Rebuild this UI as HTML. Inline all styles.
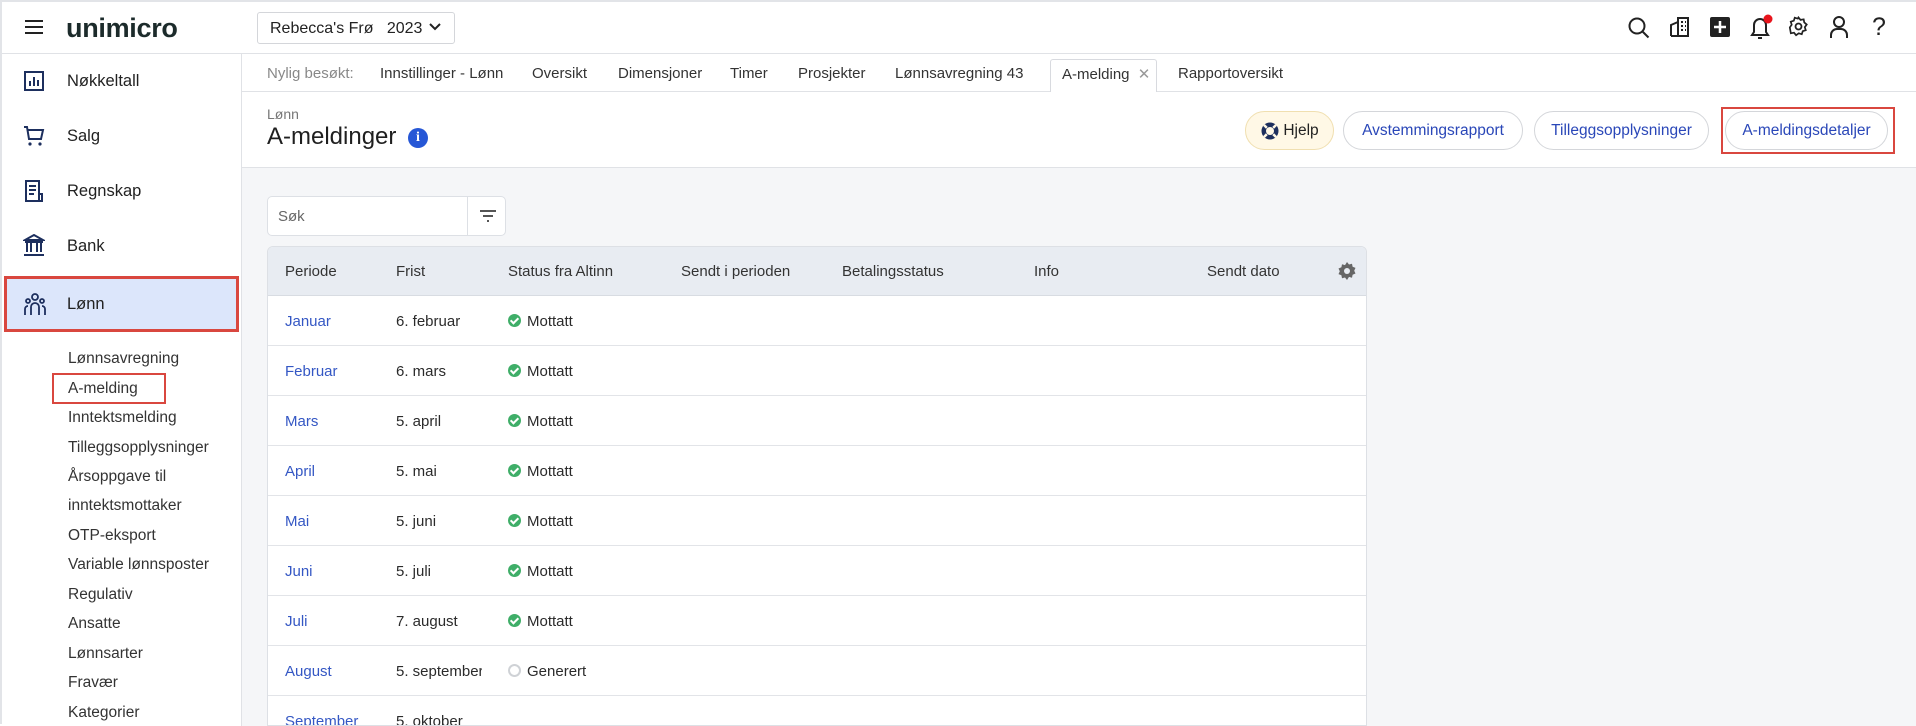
<!DOCTYPE html>
<html><head><meta charset="utf-8"><style>
*{box-sizing:border-box;margin:0;padding:0}
body{width:1916px;height:724px;overflow:hidden;font-family:"Liberation Sans",sans-serif;color:#2b2b2b;background:#fff;position:relative;border:2px solid #e2e4e8}
.abs{position:absolute}
.hdr{left:0;top:0;width:1916px;height:52px;border-bottom:1px solid #e0e2e6;background:#fff}
.side{left:0;top:52px;width:240px;height:672px;border-right:1px solid #e0e2e6;background:#fff}
.nav{position:absolute;left:65px;font-size:16.5px;color:#222}
.sub{position:absolute;left:66px;font-size:15.5px;color:#333}
.tabs{left:240px;top:52px;width:1676px;height:38px;border-bottom:1px solid #e0e2e6;background:#fff;font-size:15px}
.tabs span{position:absolute;top:11px;color:#333}
.ph{left:240px;top:90px;width:1676px;height:76px;background:#fff;border-bottom:1px solid #e0e2e6}
.content{left:240px;top:166px;width:1676px;height:558px;background:#f5f6f8}
.btn{position:absolute;top:109px;height:39px;border:1px solid #d4d6da;border-radius:20px;background:#fff;color:#2a47b8;font-size:15.5px;display:flex;align-items:center;justify-content:center}
.tbl{left:265px;top:244px;width:1100px;height:480px;background:#fff;border:1px solid #dde0e5;border-radius:6px 6px 0 0;overflow:hidden}
.th{height:49px;background:#e8ecf2;border-bottom:1px solid #d8dce2;position:relative;font-size:15px;color:#333}
.th span,.row span{position:absolute}
.th span{top:16px}
.row{height:50px;border-bottom:1px solid #e2e4e8;position:relative;font-size:15px}
.row span{top:17px}
.lnk{color:#3457c4}
.ok{display:inline-block;width:13px;height:13px;border-radius:50%;background:#3fae68;vertical-align:-1px;margin-right:6px;position:relative}
.ok:after{content:"";position:absolute;left:4px;top:2px;width:3px;height:6px;border:solid #fff;border-width:0 2px 2px 0;transform:rotate(45deg)}
.gen{display:inline-block;width:13px;height:13px;border-radius:50%;border:2px solid #cfd2d6;vertical-align:-1px;margin-right:6px}
</style></head><body>
<div class="abs hdr">
 <svg class="abs" style="left:22px;top:17px" width="20" height="16"><path d="M1 2h18M1 8h18M1 14h18" stroke="#222" stroke-width="2"/></svg>
 <div class="abs" style="left:64px;top:11px;font-size:27px;font-weight:bold;color:#1c2b2b;letter-spacing:-0.3px">unimicro</div>
 <div class="abs" style="left:255px;top:10px;width:198px;height:32px;border:1px solid #d4d6da;border-radius:3px;font-size:16px;padding:7px 12px;color:#222">Rebecca's Frø&nbsp;&nbsp; 2023</div>
 <svg class="abs" style="left:427px;top:21px" width="12" height="8"><path d="M1 1l5 5 5-5" stroke="#222" stroke-width="2" fill="none"/></svg>
 <svg class="abs" style="left:1625px;top:14px" width="24" height="24"><circle cx="10" cy="10" r="7.5" stroke="#222" stroke-width="2" fill="none"/><path d="M15.5 15.5l6 6" stroke="#222" stroke-width="2"/></svg>
 <svg class="abs" style="left:1667px;top:14px" width="22" height="22"><path d="M2 20V9l7-3v14M9 20V2h10v18zM2 20h18" stroke="#222" stroke-width="2" fill="none"/><path d="M12 6h2M16 6h1M12 10h2M16 10h1M12 14h2M16 14h1" stroke="#222" stroke-width="2"/></svg>
 <svg class="abs" style="left:1708px;top:15px" width="20" height="20"><rect width="20" height="20" rx="2" fill="#222"/><path d="M10 4v12M4 10h12" stroke="#fff" stroke-width="2.5"/></svg>
 <svg class="abs" style="left:1746px;top:12px" width="26" height="28"><path d="M4 21h16l-2-3V11a6 6 0 0 0-12 0v7z" stroke="#222" stroke-width="2" fill="none"/><path d="M10 24h4" stroke="#222" stroke-width="2"/><circle cx="20" cy="5" r="4.5" fill="#e8141c"/></svg>
 <svg class="abs" style="left:1786px;top:14px" width="22" height="22"><path d="M11 1.5l2.2 2.6 3.3-.6.6 3.3 2.6 2.2-2 2.8 1 3.2-3.2 1-1 3.2-3.2-1-2.8 2-2.2-2.6-3.3.6-.6-3.3L1.9 12l2-2.8-1-3.2 3.2-1 1-3.2 3.2 1z" stroke="#222" stroke-width="1.8" fill="none" transform="scale(.95)"/><circle cx="10.5" cy="10.5" r="3" stroke="#222" stroke-width="1.8" fill="none"/></svg>
 <svg class="abs" style="left:1827px;top:13px" width="20" height="24"><circle cx="10" cy="7" r="5" stroke="#222" stroke-width="2" fill="none"/><path d="M2 23v-3a6 6 0 0 1 6-6h4a6 6 0 0 1 6 6v3" stroke="#222" stroke-width="2" fill="none"/></svg>
 <div class="abs" style="left:1870px;top:11px;font-size:25px;color:#222">?</div>
</div>
<div class="abs side">
 <svg class="abs" style="left:22px;top:17px" width="20" height="20"><rect x="1" y="1" width="18" height="18" stroke="#1d2f5e" stroke-width="2" fill="none"/><path d="M6 15V10M10 15V6M14 15V9" stroke="#1d2f5e" stroke-width="2"/></svg>
 <div class="nav" style="top:18px">Nøkkeltall</div>
 <svg class="abs" style="left:21px;top:71px" width="22" height="22"><path d="M1 2h3l2 12h12l2-9H5" stroke="#1d2f5e" stroke-width="2" fill="none"/><circle cx="7" cy="19" r="1.6" fill="#1d2f5e"/><circle cx="17" cy="19" r="1.6" fill="#1d2f5e"/></svg>
 <div class="nav" style="top:73px">Salg</div>
 <svg class="abs" style="left:22px;top:126px" width="20" height="22"><path d="M2 1h13v20H2z M15 14h3v7h-3" stroke="#1d2f5e" stroke-width="2" fill="none"/><path d="M5 6h7M5 10h7M5 14h5" stroke="#1d2f5e" stroke-width="2"/></svg>
 <div class="nav" style="top:128px">Regnskap</div>
 <svg class="abs" style="left:21px;top:180px" width="22" height="22"><path d="M11 1l9 5H2z" stroke="#1d2f5e" stroke-width="2" fill="none"/><path d="M4 9v9M8 9v9M14 9v9M18 9v9M1 21h20M2 8h18" stroke="#1d2f5e" stroke-width="2"/></svg>
 <div class="nav" style="top:183px">Bank</div>
 <div class="abs" style="left:2px;top:222px;width:235px;height:56px;background:#dce6fb;border:3px solid #d9473f"></div>
 <svg class="abs" style="left:21px;top:238px" width="24" height="24"><circle cx="12" cy="5" r="3" stroke="#1d2f5e" stroke-width="1.8" fill="none"/><circle cx="5" cy="9" r="2" stroke="#1d2f5e" stroke-width="1.8" fill="none"/><circle cx="19" cy="9" r="2" stroke="#1d2f5e" stroke-width="1.8" fill="none"/><path d="M8 23v-8a4 4 0 0 1 8 0v8M2 23v-6a3 3 0 0 1 3-3M22 23v-6a3 3 0 0 0-3-3" stroke="#1d2f5e" stroke-width="1.8" fill="none"/></svg>
 <div class="nav" style="top:241px">Lønn</div>
 <div class="sub" style="top:296px">Lønnsavregning</div>
 <div class="abs" style="left:50px;top:319px;width:114px;height:31px;border:2px solid #d9473f"></div>
 <div class="sub" style="top:326px">A-melding</div>
 <div class="sub" style="top:355px">Inntektsmelding</div>
 <div class="sub" style="top:385px">Tilleggsopplysninger</div>
 <div class="sub" style="top:414px">Årsoppgave til</div>
 <div class="sub" style="top:443px">inntektsmottaker</div>
 <div class="sub" style="top:473px">OTP-eksport</div>
 <div class="sub" style="top:502px">Variable lønnsposter</div>
 <div class="sub" style="top:532px">Regulativ</div>
 <div class="sub" style="top:561px">Ansatte</div>
 <div class="sub" style="top:591px">Lønnsarter</div>
 <div class="sub" style="top:620px">Fravær</div>
 <div class="sub" style="top:650px">Kategorier</div>
</div>
<div class="abs tabs">
 <span style="left:25px;color:#888">Nylig besøkt:</span>
 <span style="left:138px">Innstillinger - Lønn</span>
 <span style="left:290px">Oversikt</span>
 <span style="left:376px">Dimensjoner</span>
 <span style="left:488px">Timer</span>
 <span style="left:556px">Prosjekter</span>
 <span style="left:653px">Lønnsavregning 43</span>
 <div class="abs" style="left:808px;top:5px;width:107px;height:34px;border:1px solid #d8dadf;border-bottom:none;background:#fff;border-radius:3px 3px 0 0"></div>
 <span style="left:820px">A-melding <span style="position:static;color:#999;margin-left:4px">✕</span></span>
 <span style="left:936px">Rapportoversikt</span>
</div>
<div class="abs ph">
 <div class="abs" style="left:25px;top:14px;font-size:14px;color:#777">Lønn</div>
 <div class="abs" style="left:25px;top:31px;font-size:24px;color:#1f1f1f">A-meldinger</div>
 <div class="abs" style="left:166px;top:36px;width:20px;height:20px;border-radius:50%;background:#2657d6;color:#fff;font-size:14px;font-weight:bold;text-align:center;line-height:20px;font-family:'Liberation Serif',serif">i</div>
</div>
<div class="abs content"></div>
<div class="btn" style="left:1243px;width:89px;background:#fff8e6;border-color:#f0dfb0;color:#222"><svg width="20" height="20" style="margin-right:3px"><circle cx="10" cy="10" r="8.5" fill="#1d2f5e"/><circle cx="10" cy="10" r="4" fill="#fff8e6"/><path d="M10 1.5v4M10 14.5v4M1.5 10h4M14.5 10h4" stroke="#fff8e6" stroke-width="2.5" transform="rotate(45 10 10)"/></svg>Hjelp</div>
<div class="btn" style="left:1341px;width:180px">Avstemmingsrapport</div>
<div class="btn" style="left:1532px;width:175px">Tilleggsopplysninger</div>
<div class="abs" style="left:1719px;top:105px;width:174px;height:47px;border:2px solid #d9473f"></div>
<div class="btn" style="left:1723px;width:163px">A-meldingsdetaljer</div>
<div class="abs" style="left:265px;top:194px;width:239px;height:40px;background:#fff;border:1px solid #dde0e5;border-radius:5px">
 <div class="abs" style="left:10px;top:11px;font-size:15px;color:#666">Søk</div>
 <div class="abs" style="left:199px;top:0;width:1px;height:38px;background:#dde0e5"></div>
 <svg class="abs" style="left:211px;top:12px" width="18" height="14"><path d="M1 2h16M4 7h10M8 12h2" stroke="#555" stroke-width="2"/></svg>
</div>
<div class="abs tbl">
 <div class="th"><span style="left:17px">Periode</span><span style="left:128px">Frist</span><span style="left:240px">Status fra Altinn</span><span style="left:413px">Sendt i perioden</span><span style="left:574px">Betalingsstatus</span><span style="left:766px">Info</span><span style="left:939px">Sendt dato</span>
 <svg style="position:absolute;left:1070px;top:15px" width="18" height="18"><path d="M9 0l2 2.5 3-.8.6 3 2.9 1.2-1.3 2.8 1.3 2.8-2.9 1.2-.6 3-3-.8L9 18l-2-2.5-3 .8-.6-3L.5 12.1 1.8 9.3.5 6.5l2.9-1.2.6-3 3 .8z" fill="#666"/><circle cx="9" cy="9" r="3" fill="#e8ecf2"/></svg></div>
 <div class="row"><span class="lnk" style="left:17px">Januar</span><span style="left:128px">6. februar</span><span style="left:240px"><i class="ok"></i>Mottatt</span></div>
 <div class="row"><span class="lnk" style="left:17px">Februar</span><span style="left:128px">6. mars</span><span style="left:240px"><i class="ok"></i>Mottatt</span></div>
 <div class="row"><span class="lnk" style="left:17px">Mars</span><span style="left:128px">5. april</span><span style="left:240px"><i class="ok"></i>Mottatt</span></div>
 <div class="row"><span class="lnk" style="left:17px">April</span><span style="left:128px">5. mai</span><span style="left:240px"><i class="ok"></i>Mottatt</span></div>
 <div class="row"><span class="lnk" style="left:17px">Mai</span><span style="left:128px">5. juni</span><span style="left:240px"><i class="ok"></i>Mottatt</span></div>
 <div class="row"><span class="lnk" style="left:17px">Juni</span><span style="left:128px">5. juli</span><span style="left:240px"><i class="ok"></i>Mottatt</span></div>
 <div class="row"><span class="lnk" style="left:17px">Juli</span><span style="left:128px">7. august</span><span style="left:240px"><i class="ok"></i>Mottatt</span></div>
 <div class="row"><span class="lnk" style="left:17px">August</span><span style="left:128px;width:86px;overflow:hidden;white-space:nowrap">5. september</span><span style="left:240px"><i class="gen"></i>Generert</span></div>
 <div class="row"><span class="lnk" style="left:17px">September</span><span style="left:128px">5. oktober</span></div>
</div>
</body></html>
